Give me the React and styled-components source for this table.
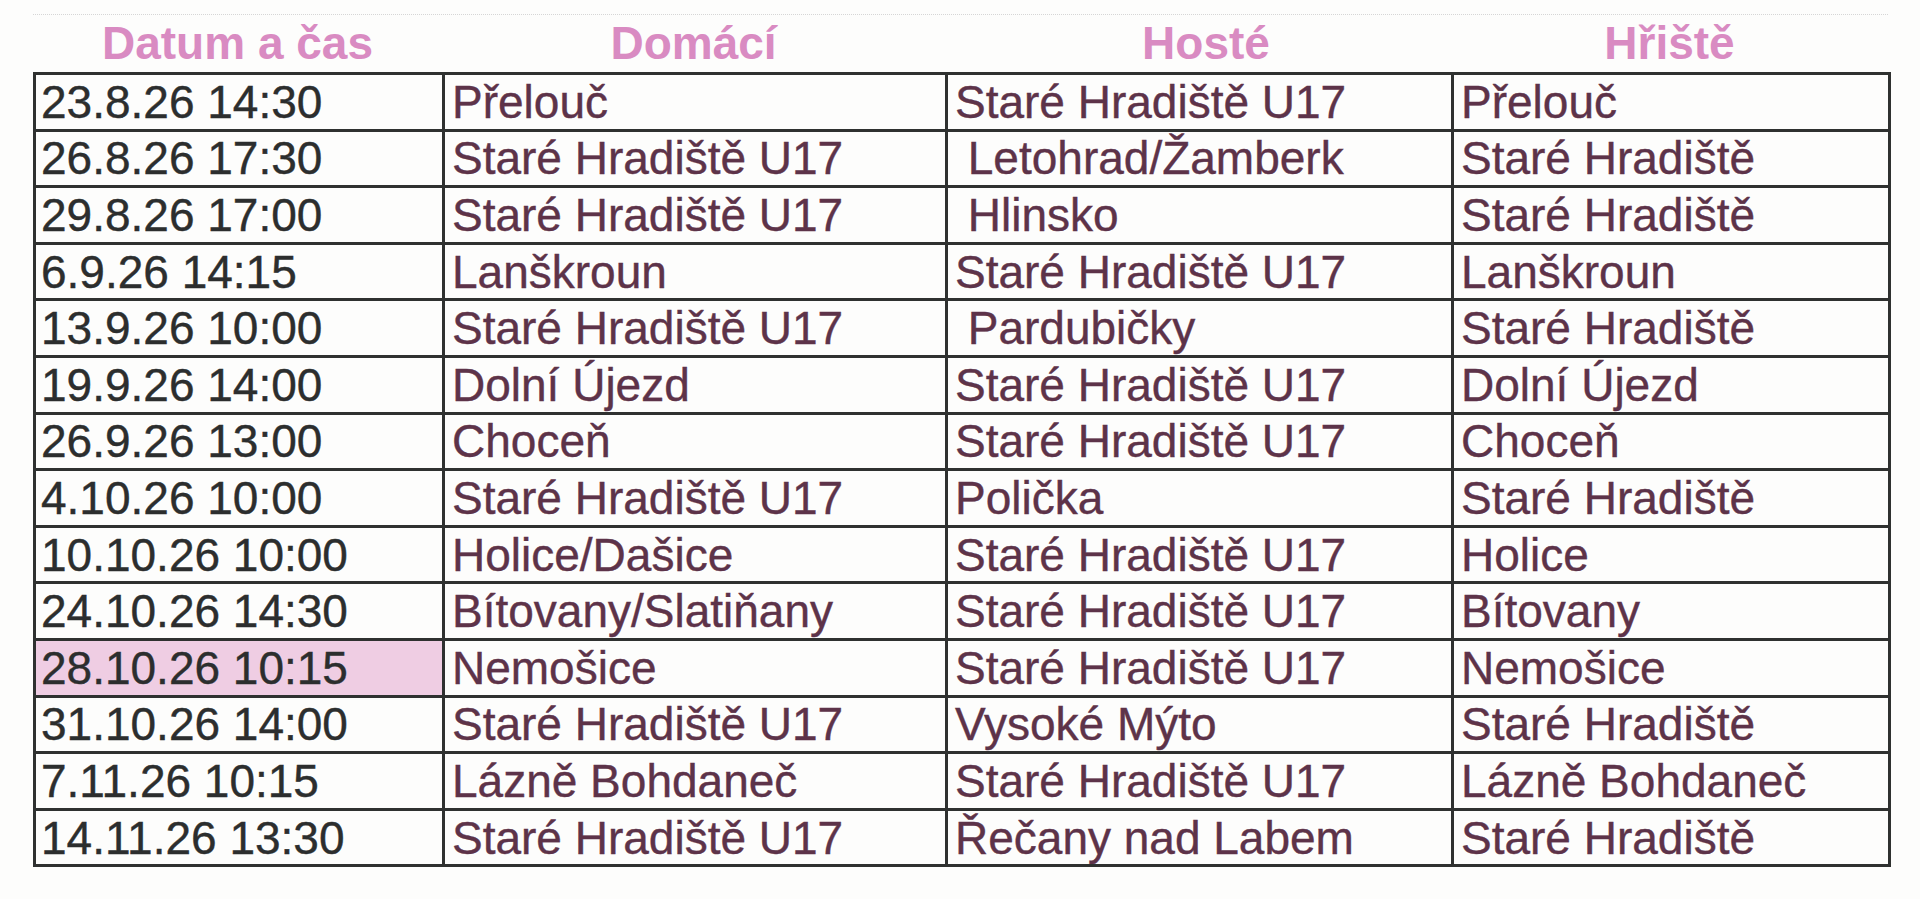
import React from "react";
import styled, { createGlobalStyle } from "styled-components";

const GlobalStyle = createGlobalStyle`
  html, body {
    margin: 0;
    padding: 0;
    background: #fdfdfc;
  }
  body {
    font-family: "Liberation Sans", Arial, sans-serif;
  }
`;

const Page = styled.div`
  width: 1920px;
  height: 899px;
  padding: 14px 0 0 33px;
  box-sizing: border-box;
  overflow: hidden;
`;

const ScanEdge = styled.div`
  width: 1855px;
  border-top: 1px dotted #d6d6d6;
`;

const HeaderRow = styled.div`
  display: grid;
  grid-template-columns: 409px 503px 506px 437px;
  height: 57px;
  align-items: end;
  padding-bottom: 6px;
  box-sizing: border-box;
`;

const Heading = styled.div`
  text-align: center;
  font-size: 46px;
  font-weight: bold;
  line-height: 1;
  color: #d98bc2;
  padding-left: ${(p) => p.shift || 0}px;
`;

const Table = styled.table`
  border-collapse: collapse;
  table-layout: fixed;
  width: 1855px;
  border: 3px solid #2f3130;
`;

const Cell = styled.td`
  border: 3px solid #2f3130;
  height: 53.6px;
  padding: 0 0 0 ${(p) => (p.first ? 5 : 7)}px;
  font-size: 46px;
  line-height: 1;
  white-space: pre;
  overflow: hidden;
  -webkit-text-stroke: 0.4px currentColor;
  color: ${(p) => (p.first ? "#2c2e2e" : "#5d3349")};
  background: ${(p) => (p.marked ? "#efcde3" : "transparent")};
`;

const columns = [
  { title: "Datum a čas", width: 409, shift: 0 },
  { title: "Domácí", width: 503, shift: 0 },
  { title: "Hosté", width: 506, shift: 16 },
  { title: "Hřiště", width: 437, shift: 0 },
];

const games = [
  ["23.8.26 14:30", "Přelouč", "Staré Hradiště U17", "Přelouč"],
  ["26.8.26 17:30", "Staré Hradiště U17", " Letohrad/Žamberk", "Staré Hradiště"],
  ["29.8.26 17:00", "Staré Hradiště U17", " Hlinsko", "Staré Hradiště"],
  ["6.9.26 14:15", "Lanškroun", "Staré Hradiště U17", "Lanškroun"],
  ["13.9.26 10:00", "Staré Hradiště U17", " Pardubičky", "Staré Hradiště"],
  ["19.9.26 14:00", "Dolní Újezd", "Staré Hradiště U17", "Dolní Újezd"],
  ["26.9.26 13:00", "Choceň", "Staré Hradiště U17", "Choceň"],
  ["4.10.26 10:00", "Staré Hradiště U17", "Polička", "Staré Hradiště"],
  ["10.10.26 10:00", "Holice/Dašice", "Staré Hradiště U17", "Holice"],
  ["24.10.26 14:30", "Bítovany/Slatiňany", "Staré Hradiště U17", "Bítovany"],
  ["28.10.26 10:15", "Nemošice", "Staré Hradiště U17", "Nemošice", true],
  ["31.10.26 14:00", "Staré Hradiště U17", "Vysoké Mýto", "Staré Hradiště"],
  ["7.11.26 10:15", "Lázně Bohdaneč", "Staré Hradiště U17", "Lázně Bohdaneč"],
  ["14.11.26 13:30", "Staré Hradiště U17", "Řečany nad Labem", "Staré Hradiště"],
];

export default function App() {
  return (
    <>
      <GlobalStyle />
      <Page>
        <ScanEdge />
        <HeaderRow>
          {columns.map((c) => (
            <Heading key={c.title} shift={c.shift}>
              {c.title}
            </Heading>
          ))}
        </HeaderRow>
        <Table>
          <colgroup>
            {columns.map((c) => (
              <col key={c.title} style={{ width: c.width }} />
            ))}
          </colgroup>
          <tbody>
            {games.map((g) => (
              <tr key={g[0]}>
                <Cell first marked={g[4]}>{g[0]}</Cell>
                <Cell>{g[1]}</Cell>
                <Cell>{g[2]}</Cell>
                <Cell>{g[3]}</Cell>
              </tr>
            ))}
          </tbody>
        </Table>
      </Page>
    </>
  );
}
